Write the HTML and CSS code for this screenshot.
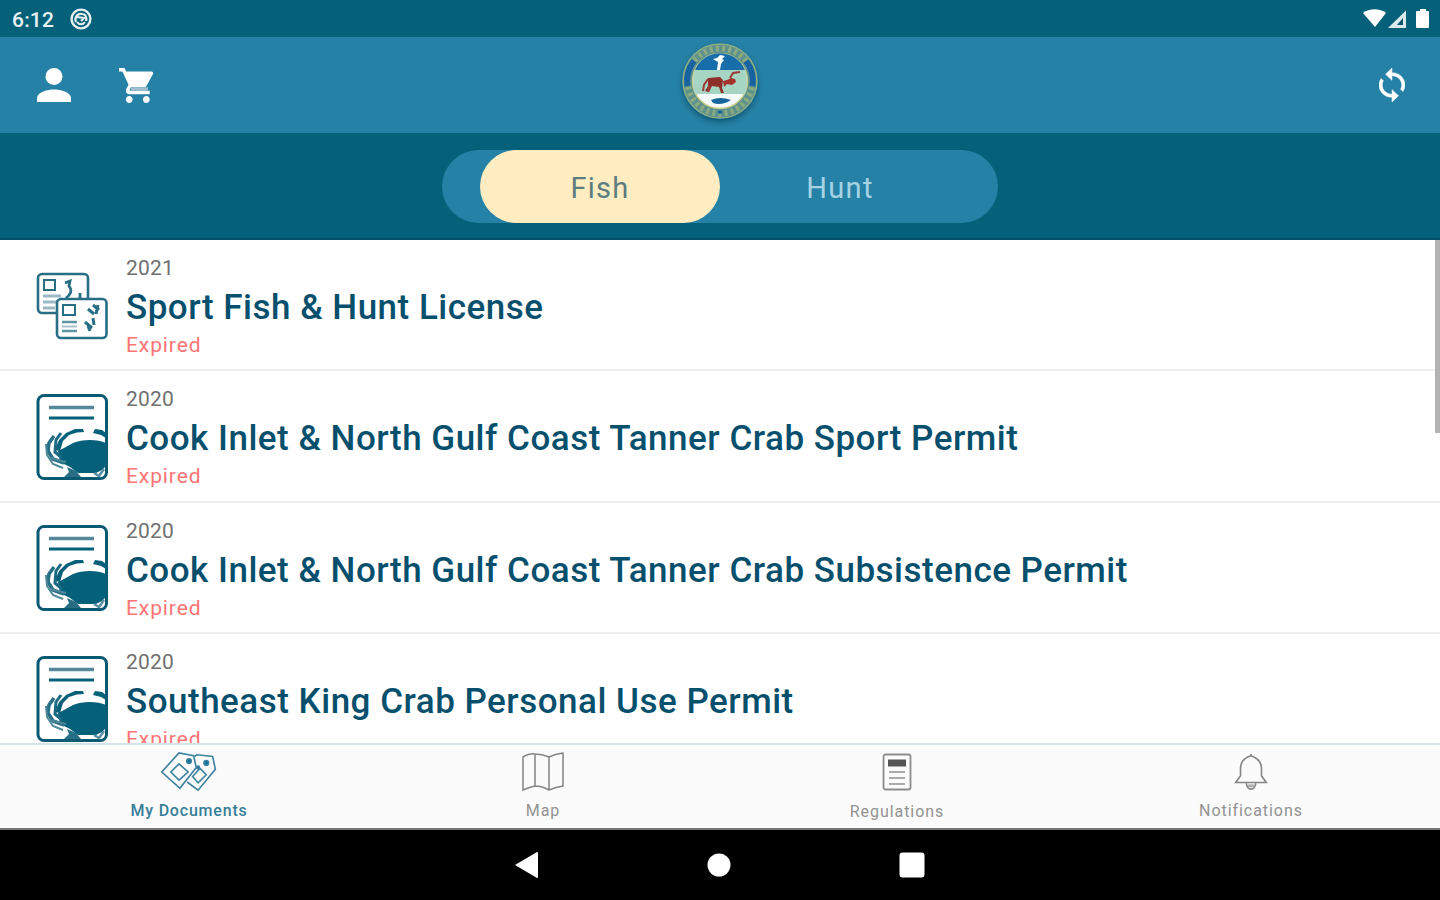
FILE: index.html
```html
<!DOCTYPE html>
<html lang="en">
<head>
    <meta charset="UTF-8">
    <meta name="viewport" content="width=device-width, initial-scale=1.0">
    <title>My Documents</title>
    <link rel="stylesheet" href="styles.css">
</head>
<body>
    <!-- shared icon for the crab permits -->
    <svg width="0" height="0" class="symbols">
        <symbol id="crab-permit" viewBox="0 0 72 86">
            <rect x="2" y="1.5" width="68.500" height="83" rx="6" fill="#fff" stroke="#0a5a73" stroke-width="3"/>
            <path d="M13 13.500h45" stroke="#56889a" stroke-width="3.500"/>
            <path d="M13 24h45" stroke="#05607a" stroke-width="3"/>
            <path d="M70 49C62 45 46 45 37 49L28 54L22 57L24 68L34 73L42 79H60L66 76L70 72z" fill="#05607a"/>
            <path d="M24 57L27 47L33 41L41 38.500L48 38L47 35L39 35L30 39L23 46L19 56z" fill="#05607a"/>
            <path d="M70 44L65 41L57 39L59 35L66 36L70 39z" fill="#05607a"/>
            <path d="M25 39L20 46L19 58L26 64" fill="none" stroke="#1b6982" stroke-width="3"/>
            <path d="M18 42L13 49L12 57L17 65L28 69" fill="none" stroke="#286f85" stroke-width="3.500"/>
            <path d="M10 50L11 61L17 70L27 74M14 64L30 68" fill="none" stroke="#4d8799" stroke-width="2"/>
            <path d="M31 73L40 77L45 83H28L33 78z" fill="#286f85"/>
            <path d="M58 79L63 82L68 75" fill="none" stroke="#5b8fa0" stroke-width="2.500"/>
        </symbol>
    </svg>

    <div class="status-bar">
        <div class="status-left">
            <span class="clock">6:12</span>
            <svg width="22" height="22" viewBox="0 0 22 22" fill="none" stroke="#e3eef1">
                <circle cx="11" cy="11" r="9.400" stroke-width="2.400"/>
                <path d="M6 14C4 9 8 5 12 6c4 0 5 4 4 7M7 9l7 1-3 3M7 14c2 3 6 3 8 0" stroke-width="2.200"/>
            </svg>
        </div>
        <svg width="66" height="20" viewBox="0 0 66 20">
            <path d="M0 4C6-1 17-1 23 4L12 18z" fill="#fff"/>
            <path d="M43 1.500V19H25z" fill="#dbe9ed"/>
            <path d="M40 9V16H34z" fill="#05546d"/>
            <path d="M55 2h2V0h6v2h2q1 0 1 1v15q0 1-1 1H54q-1 0-1-1V3q0-1 1-1z" fill="#fff"/>
        </svg>
    </div>

    <header class="app-bar">
        <div class="app-actions">
            <svg width="34" height="34" viewBox="0 0 34 34" fill="#fff">
                <circle cx="17" cy="8.500" r="8.500"/>
                <path d="M0 34v-4c0-6 11-8.500 17-8.500s17 2.500 17 8.500v4z"/>
            </svg>
            <svg width="35" height="35" viewBox="1 2 20.500 20" preserveAspectRatio="none" fill="#fff">
                <path d="M7 18c-1.100 0-1.990.9-1.990 2S5.900 22 7 22s2-.9 2-2-.9-2-2-2zM1 2v2h2l3.600 7.590-1.350 2.450c-.16.280-.25.610-.25.960 0 1.100.9 2 2 2h12v-2H7.420c-.14 0-.25-.11-.25-.25l.03-.12.9-1.630h7.450c.75 0 1.410-.41 1.750-1.030l3.580-6.490A1 1 0 0 0 20 4H5.210l-.94-2H1zm16 16c-1.100 0-1.990.9-1.990 2s.89 2 1.990 2 2-.9 2-2-.9-2-2-2z"/>
                <path d="M8.500 13h9.500v2H7.500z" fill="#9fc0d0"/>
            </svg>
        </div>
        <svg class="seal" width="76" height="76" viewBox="0 0 76 76">
            <circle cx="38" cy="38" r="37" fill="#5c918c" stroke="#8fae82" stroke-width="1.500"/>
            <circle cx="38" cy="38" r="32.500" fill="none" stroke="#a9bb7c" stroke-width="6" stroke-dasharray="3 3.200" opacity=".6"/>
            <path d="M12 18A33 33 0 0 0 5.500 43M64 18A33 33 0 0 1 70.500 43" stroke="#1763a2" stroke-width="6" fill="none"/>
            <circle cx="38" cy="38" r="27.500" fill="#f4f9fa" stroke="#c8cd8b" stroke-width="1.500"/>
            <path d="M13 27A27 27 0 0 1 63 27z" fill="#176eaa"/>
            <path d="M13 27H63Q67 40 63 51H13Q9 39 13 27z" fill="#a6d5c4"/>
            <path d="M31 16l4-1 3-3 5 1-3 3 2 1-3 4-1 6h-3l1-8z" fill="#fff"/>
            <path d="M26 35l12-1 3 3-1 8 2 5-3 0-2-6-7-1-3 6-4-1 3-5z" fill="#8d3029"/>
            <path d="M41 38l4-1 4-2 4 1 1 3-4 3-5-1-3 3z" fill="#a52f29"/>
            <path d="M26 36l-4 6-1 6m6-5-1 6M48 35l3-5 7-1" fill="none" stroke="#9b3b33" stroke-width="2"/>
            <path d="M29 57q9-4 20 0-9 6-18 3z" fill="#17659d"/>
            <path d="M36 69h4" stroke="#1763a2" stroke-width="3"/>
        </svg>
        <svg class="sync" width="26" height="34" viewBox="4 1 16 22" preserveAspectRatio="none" fill="#fff" stroke="#fff" stroke-width="0.300">
            <path d="M12 4V1L8 5l4 4V6c3.310 0 6 2.690 6 6 0 1.010-.25 1.970-.7 2.800l1.460 1.460A7.930 7.930 0 0 0 20 12c0-4.420-3.580-8-8-8zm0 14c-3.310 0-6-2.690-6-6 0-1.010.25-1.970.7-2.800L5.240 7.740A7.930 7.930 0 0 0 4 12c0 4.420 3.580 8 8 8v3l4-4-4-4v3z"/>
        </svg>
    </header>

    <div class="tab-bar">
        <div class="switch">
            <button type="button" class="tab active">Fish</button>
            <button type="button" class="tab">Hunt</button>
        </div>
    </div>

    <main class="documents">
        <div class="document">
            <svg class="license-icon" width="72" height="68" viewBox="0 0 72 68" fill="none" stroke="#286f85">
                <rect x="2" y="2" width="50" height="39" rx="4" stroke-width="2.600"/>
                <rect x="8" y="8" width="11" height="10" stroke-width="2"/>
                <path d="M7 24h18M7 30h14M7 36h12" stroke-width="3" stroke="#9ab9c4"/>
                <path d="M29 11l5-2-1 5c4 5 1 9-3 12M44 26V21" stroke-width="2.800"/>
                <rect x="21" y="27" width="49.500" height="39" rx="4" fill="#fff" stroke-width="2.600"/>
                <rect x="27" y="33" width="12" height="10" stroke-width="2"/>
                <path d="M26 50h15M26 59h15" stroke-width="2.500" stroke="#5f94a4"/>
                <path d="M26 54.500h15" stroke-width="2" stroke="#a8c2cc"/>
                <path d="M52 37l6 5M57 33l6 5M62 33l-2 9M49 50l7 6M52 54l2 5M57 46l1 7" stroke-width="3"/>
            </svg>
            <div class="info">
                <span class="year">2021</span>
                <h2>Sport Fish &amp; Hunt License</h2>
                <span class="expired">Expired</span>
            </div>
        </div>
        <div class="document">
            <svg class="permit-icon" width="72" height="86"><use href="#crab-permit"/></svg>
            <div class="info">
                <span class="year">2020</span>
                <h2>Cook Inlet &amp; North Gulf Coast Tanner Crab Sport Permit</h2>
                <span class="expired">Expired</span>
            </div>
        </div>
        <div class="document">
            <svg class="permit-icon" width="72" height="86"><use href="#crab-permit"/></svg>
            <div class="info">
                <span class="year">2020</span>
                <h2>Cook Inlet &amp; North Gulf Coast Tanner Crab Subsistence Permit</h2>
                <span class="expired">Expired</span>
            </div>
        </div>
        <div class="document">
            <svg class="permit-icon" width="72" height="86"><use href="#crab-permit"/></svg>
            <div class="info">
                <span class="year">2020</span>
                <h2>Southeast King Crab Personal Use Permit</h2>
                <span class="expired">Expired</span>
            </div>
        </div>
        <div class="scrollbar"></div>
    </main>

    <nav class="bottom-nav">
        <a class="nav-item active">
            <svg width="62" height="44" viewBox="0 0 62 44" fill="none" stroke="#3d829e" stroke-width="1.800">
                <path d="M1 22L20 1L36 4L39 17L21 40z"/>
                <path d="M20 13L30 22L20 31L11 22z"/>
                <path d="M37 5L40 3L57 5L60 19L41 42L29 33"/>
                <path d="M43 18L50 25L41 34L35 27z"/>
                <circle cx="31" cy="10" r="2.500" fill="#05709b"/>
                <circle cx="50" cy="12" r="2.500" fill="#05709b"/>
                <circle cx="41" cy="17" r="1.500" fill="#05709b"/>
            </svg>
            <span>My Documents</span>
        </a>
        <a class="nav-item">
            <svg width="44" height="40" viewBox="0 0 44 40" fill="none" stroke="#858585" stroke-width="1.500">
                <path d="M2 5Q9 1 14 2Q21 2 28 5Q34 2 42 1V34Q35 35 28 38Q21 34 14 34Q9 35 2 38zM14 2V34M28 5V38"/>
            </svg>
            <span>Map</span>
        </a>
        <a class="nav-item regulations">
            <svg width="30" height="38" viewBox="0 0 30 38" fill="none">
                <rect x="1.500" y="1.500" width="27" height="35" rx="2" stroke="#8c8c8c" stroke-width="1.800"/>
                <path d="M6 10h18" stroke="#555" stroke-width="7"/>
                <path d="M7 19h16M7 25h16M7 31h16" stroke="#aaa" stroke-width="2"/>
            </svg>
            <span>Regulations</span>
        </a>
        <a class="nav-item">
            <svg width="36" height="42" viewBox="0 0 36 42" fill="none" stroke="#858585" stroke-width="1.700">
                <path d="M18 2V4M7 25V17C7 10 12 6 18 4Q29 8 29 17V25L34 32H2zM13 33Q14 39 18 39Q22 39 23 33"/>
                <path d="M15 34h6v3h-6z" fill="#aaa" stroke="none"/>
            </svg>
            <span>Notifications</span>
        </a>
    </nav>

    <div class="system-nav">
        <svg width="24" height="26" viewBox="0 0 24 26" fill="#fff"><path d="M0 13L22 0Q23 0 23 1V25Q23 26 22 26z"/></svg>
        <svg width="24" height="24" viewBox="0 0 24 24" fill="#fff"><circle cx="12" cy="12" r="11.500"/></svg>
        <svg width="26" height="26" viewBox="0 0 26 26" fill="#fff"><rect x="0.500" y="0.500" width="25" height="25" rx="3"/></svg>
    </div>
</body>
</html>
```
FILE: styles.css
```css
body {
    font-family: Roboto, sans-serif;
    margin: 0;
    height: 900px;
    display: flex;
    flex-direction: column;
    overflow: hidden;
    background: #fff;
}

svg {
    display: block;
    flex: none;
}

.symbols {
    position: absolute;
}

.status-bar {
    flex: none;
    box-sizing: border-box;
    height: 37px;
    padding: 0 11px 0 12px;
    display: flex;
    justify-content: space-between;
    align-items: center;
    background: #056079;
}

.status-left {
    display: flex;
    align-items: center;
    gap: 16px;
}

.clock {
    color: #e8f1f3;
    font-size: 21px;
    font-weight: 500;
    letter-spacing: 0.2px;
    padding-top: 2px;
}

.app-bar {
    flex: none;
    box-sizing: border-box;
    height: 96px;
    padding: 0 35px 0 37px;
    display: grid;
    grid-template-columns: 1fr 76px 1fr;
    align-items: center;
    background: #2581a5;
}

.app-actions {
    display: flex;
    align-items: center;
    gap: 48px;
}

.seal {
    margin: -8px 0 0 -1px;
    border-radius: 50%;
    box-shadow: 0 3px 5px rgba(0, 50, 70, 0.5);
}

.sync {
    justify-self: end;
}

.tab-bar {
    flex: none;
    box-sizing: border-box;
    height: 107px;
    padding-top: 17px;
    background: #056079;
    border-bottom: 2px solid #05506a;
}

.switch {
    box-sizing: border-box;
    width: 556px;
    height: 73px;
    margin: 0 auto;
    padding: 0 38px;
    display: flex;
    border-radius: 37px;
    background: #2581a5;
}

.tab {
    width: 240px;
    height: 73px;
    padding: 3px 0 0;
    border: none;
    border-radius: 37px;
    background: none;
    color: #a5d3e4;
    font-family: inherit;
    font-size: 29px;
    letter-spacing: 1.3px;
}

.tab.active {
    background: #ffecc0;
    color: #5c7d80;
}

.documents {
    position: relative;
    flex: 1;
    min-height: 0;
    overflow: hidden;
}

.document {
    box-sizing: border-box;
    height: 131.3px;
    padding-left: 36px;
    display: flex;
    gap: 18px;
    border-bottom: 2px solid #eee;
}

.license-icon {
    margin-top: 32px;
}

.permit-icon {
    margin-top: 22.5px;
}

.info {
    padding-top: 16px;
}

.year,
.expired {
    display: block;
    font-size: 21px;
    line-height: 24px;
    letter-spacing: 0.2px;
    color: #707070;
}

.expired {
    color: #ff7474;
    letter-spacing: 0.9px;
}

h2 {
    margin: 8px 0 5px;
    font-size: 35px;
    line-height: 40px;
    font-weight: 500;
    letter-spacing: 0.5px;
    color: #07506d;
    white-space: nowrap;
}

.scrollbar {
    position: absolute;
    top: 0;
    right: 0;
    width: 5px;
    height: 193px;
    background: #b3b3b3;
}

.bottom-nav {
    flex: none;
    box-sizing: border-box;
    height: 87px;
    padding: 0 12px;
    display: grid;
    grid-template-columns: repeat(4, 1fr);
    border-top: 2px solid #d5e2e9;
    border-bottom: 2px solid #777;
    background: #fbfbfb;
}

.nav-item {
    display: flex;
    flex-direction: column;
    align-items: center;
    color: #929292;
    font-size: 16px;
    line-height: 20px;
    letter-spacing: 0.95px;
}

.nav-item svg {
    height: 40px;
    margin: 7px 0 9px;
}

.nav-item.active {
    color: #367e99;
    font-weight: 500;
    letter-spacing: 0.8px;
}

.nav-item.regulations span {
    padding-top: 1px;
}

.system-nav {
    flex: none;
    height: 70px;
    display: flex;
    justify-content: center;
    align-items: center;
    gap: 168px;
    background: #000;
}
```
